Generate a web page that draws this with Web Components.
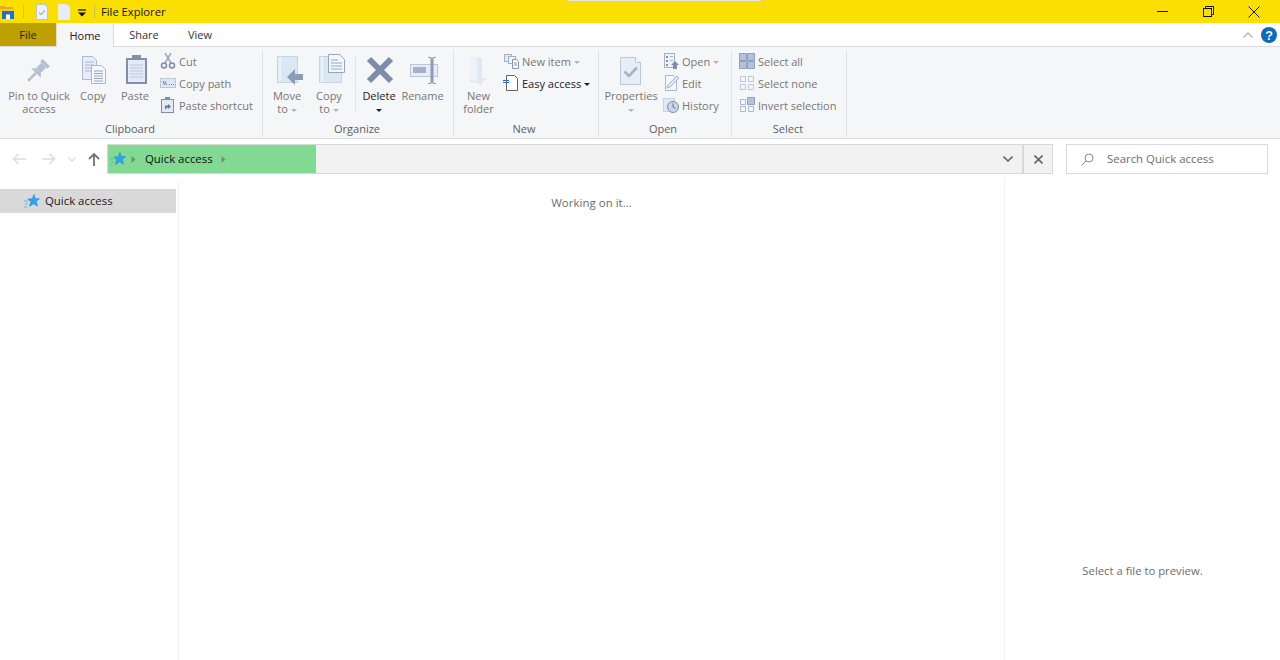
<!DOCTYPE html>
<html lang="en">
<head>
<meta charset="utf-8">
<title>File Explorer</title>
<style>
  html, body { margin: 0; height: 100%; overflow: hidden; background: #fff; }
  body { font-family: "Open Sans", "Noto Sans", "Liberation Sans", sans-serif; font-size: 11px; }
</style>
</head>
<body>
<fx-window>
  <fx-titlebar slot="top">File Explorer</fx-titlebar>
  <fx-tabs slot="top"></fx-tabs>
  <fx-ribbon slot="top">
    <fx-group label="Clipboard" width="263" pad="4" shift="2">
      <fx-large icon="pin" width="70">Pin to Quick<br>access</fx-large>
      <fx-large icon="copy" width="38">Copy</fx-large>
      <fx-large icon="paste" width="46">Paste</fx-large>
      <fx-stack style="margin-left:2px">
        <fx-small icon="cut">Cut</fx-small>
        <fx-small icon="copypath">Copy path</fx-small>
        <fx-small icon="shortcut">Paste shortcut</fx-small>
      </fx-stack>
    </fx-group>
    <fx-group label="Organize" width="191" pad="3" shift="2">
      <fx-large icon="moveto" width="42">Move<br>to <fx-caret></fx-caret></fx-large>
      <fx-large icon="copyto" width="42">Copy<br>to <fx-caret></fx-caret></fx-large>
      <fx-vrule></fx-vrule>
      <fx-large icon="del" width="46" strong>Delete<br><fx-caret dark></fx-caret></fx-large>
      <fx-large icon="rename" width="41">Rename</fx-large>
    </fx-group>
    <fx-group label="New" width="145" pad="3" shift="4">
      <fx-large icon="folder" width="43">New<br>folder</fx-large>
      <fx-stack style="margin-left:3px">
        <fx-small icon="newitem">New item <fx-caret></fx-caret></fx-small>
        <fx-small icon="easy" strong>Easy access <fx-caret dark></fx-caret></fx-small>
      </fx-stack>
    </fx-group>
    <fx-group label="Open" width="133" pad="3" shift="4">
      <fx-large icon="props" width="58">Properties<br><fx-caret></fx-caret></fx-large>
      <fx-stack style="margin-left:3px">
        <fx-small icon="open">Open <fx-caret></fx-caret></fx-small>
        <fx-small icon="edit">Edit</fx-small>
        <fx-small icon="history">History</fx-small>
      </fx-stack>
    </fx-group>
    <fx-group label="Select" width="115" pad="7" shift="2">
      <fx-stack>
        <fx-small icon="selall">Select all</fx-small>
        <fx-small icon="selnone">Select none</fx-small>
        <fx-small icon="selinv">Invert selection</fx-small>
      </fx-stack>
    </fx-group>
  </fx-ribbon>
  <fx-address slot="top"></fx-address>
  <fx-nav slot="nav">Quick access</fx-nav>
  <fx-main slot="main">Working on it...</fx-main>
  <fx-preview slot="preview">Select a file to preview.</fx-preview>
</fx-window>

<script>
// All the ribbon pictures, keyed by name. Large ones are drawn on a 32 box, small ones on 16.
const line = '#a9b9d3'
const pale = '#e6edf7'

const star = `<svg width="16" height="16" viewBox="0 0 16 16">
  <path d="M10 1.500l1.300 4 4.200.2-3.300 2.700 1.300 4.800-3.900-2.500-4.100 2.800 1.300-4.800-3-2.600 4.400-.4z" fill="#2ba6ee" stroke="#1b7fc9" stroke-width=".5"/>
  <path d="M0 8h4M1 11h3M0 14h3" stroke="#5db5ec" stroke-width="1"/>
</svg>`

const LARGE = {
  pin: `<g transform="translate(-2 2) rotate(45 17 15) translate(2.500 2.500) scale(.85)" fill="#b4c0d2"><rect x="11" y="1" width="12" height="4"/><rect x="13" y="5" width="8" height="9"/><path d="M9 18l4-4h8l4 4z"/><rect x="15.500" y="18" width="3" height="13"/></g>`,
  copy: `<path d="M5.500 2.500h10l4 4v19h-14z" fill="${pale}" stroke="${line}"/><path d="M8 8h9M8 11h9M8 14h9M8 17h9" stroke="${line}"/><path d="M14.500 11.500h10l4 4v14h-14z" fill="#f4f7fb" stroke="${line}"/><path d="M17 17h9M17 19.500h9M17 22h9M17 24.500h9M17 27h9" stroke="#94a5c2"/>`,
  paste: `<rect x="7" y="4" width="21" height="26" fill="#8090ab"/><rect x="9" y="6" width="17" height="22" fill="#e3eaf5"/><path d="M11 11h13M11 14h13M11 17h13M11 20h13M11 23h13" stroke="#bccbe2"/><rect x="13" y="1" width="9" height="5" fill="#8090ab"/>`,
  moveto: `<rect x="6.500" y="2.500" width="20" height="26" fill="#dce7f4" stroke="#c5d4e8"/><path d="M9 3v25" stroke="#eef3fa" stroke-width="2"/><path d="M16 23l8-8v5h8v6h-8v5z" fill="#8c9cb5"/>`,
  copyto: `<rect x="6.500" y="2.500" width="22" height="26" fill="#dce7f4" stroke="#c5d4e8"/><path d="M9 3v25" stroke="#eef3fa" stroke-width="2"/><path d="M15.500.5h11l5 5v13h-16z" fill="#f4f7fb" stroke="#94a5c2"/><path d="M18 6h7M18 9h11M18 12h11M18 15h11" stroke="#94a5c2"/>`,
  del: `<path d="M6 5l22 22M28 5L6 27" stroke="#7d8ca8" stroke-width="6"/>`,
  rename: `<rect x="3.500" y="10.500" width="27" height="12" fill="#e6edf7" stroke="#b9c8dd"/><rect x="6" y="13" width="13" height="6" fill="#a3b2ca"/><path d="M25 4v25" stroke="#8c9cb5" stroke-width="3"/><path d="M21 3.500h3l1 1 1-1h3M21 29.500h3l1-1 1 1h3" stroke="#8c9cb5" fill="none"/>`,
  folder: `<path d="M6 3l13 1v20l6 2-6 1v4l-13-4z" fill="#dfe8f4"/><path d="M6 3l8 1 0 24-8-3z" fill="#eef3fa"/>`,
  props: `<path d="M5.500 3.500h15l5 5v22h-20z" fill="${pale}" stroke="#b9c8dd"/><path d="M20.500 3.500v5h5" fill="#f7f9fc" stroke="#b9c8dd"/><path d="M9.500 17.500l4.500 4.500 8-8.500" fill="none" stroke="#a5b3c8" stroke-width="2.600"/>`
}

const SMALL = {
  cut: `<path d="M5 0l6 10M11 0L5 10" stroke="#9aa8bf" stroke-width="1.500"/><circle cx="4" cy="12.500" r="2.500" fill="none" stroke="#7f8ea8" stroke-width="1.500"/><circle cx="12" cy="12.500" r="2.500" fill="none" stroke="#7f8ea8" stroke-width="1.500"/>`,
  copypath: `<rect x=".5" y="3.500" width="15" height="9" fill="#dfe8f4" stroke="#b9c8dd"/><path d="M3 6l1.500 4M5 6l1.500 4" stroke="#6d7f9c"/><path d="M9 9.500h1M11 9.500h1M13 9.500h1" stroke="#6d7f9c"/>`,
  shortcut: `<rect x="1.500" y="2.500" width="12" height="13" fill="#e3eaf5" stroke="#7f8ea8"/><rect x="5" y="0" width="5" height="3" fill="#7f8ea8"/><path d="M5 12V8.500h3V7l3 2.500L8 12v-1.500H6.500V12z" fill="#65758f"/>`,
  newitem: `<rect x="1.500" y="1.500" width="7" height="7" fill="#dfe8f4" stroke="#9fb0c9"/><rect x="5.500" y="3.500" width="7" height="7" fill="#eef3fa" stroke="#9fb0c9"/><path d="M9.500 6.500h4l2 2v7h-6z" fill="#fff" stroke="#8494ae"/><path d="M11 10h3M11 12h3" stroke="#8494ae"/>`,
  easy: `<path d="M3.500.5h8l3 3v12h-11z" fill="#fff" stroke="#666"/><path d="M0 5.500h6M0 7.500h6M3.500 3.500v6" stroke="#2a70c2"/>`,
  open: `<rect x="1.500" y=".5" width="10" height="14" fill="#eef3fa" stroke="#a3b2ca"/><path d="M3 3h2v2H3zM3 7h2v2H3zM3 11h2v2H3z" fill="#8494ae"/><path d="M7 3.500h3M7 7.500h3" stroke="#a3b2ca"/><path d="M8 12l4-4 4 4h-2v4h-4v-4z" fill="#7f8ea8"/>`,
  edit: `<path d="M2.500.5h8l3 3v12h-11z" fill="#f4f7fb" stroke="#a9b9d3"/><path d="M4 13l1-3 9-9 2 2-9 9z" fill="#dfe8f4" stroke="#94a5c2" stroke-width=".8"/>`,
  history: `<rect x=".5" y="1.500" width="11" height="13" fill="#dfe8f4" stroke="#c5d4e8"/><circle cx="10" cy="10" r="5.500" fill="#cbd6e6" stroke="#7f8ea8"/><path d="M10 6.500V10l2.500 1.500" stroke="#5f6f8a" fill="none"/>`,
  selall: `<path d="M.5.500h7v7h-7zM8.500.5h7v7h-7zM.5 8.500h7v7h-7zM8.500 8.500h7v7h-7z" fill="#b4c2d9" stroke="#8ea0bd"/>`,
  selnone: `<path d="M1.500 1.500h5v5h-5zM9.500 1.500h5v5h-5zM1.500 9.500h5v5h-5zM9.500 9.500h5v5h-5z" fill="#f5f6f7" stroke="#b9c8dd"/>`,
  selinv: `<path d="M1.500 2.500h5v5h-5zM1.500 9.500h5v5h-5zM9.500 9.500h5v5h-5z" fill="#f5f6f7" stroke="#a9b9d3"/><path d="M8.500.5h7v7h-7z" fill="#b4c2d9" stroke="#8ea0bd"/>`
}

/** Small helper so each element only has to hand over its css and markup. */
class FxBase extends HTMLElement {
  render (css, html) {
    if (this.shadowRoot) return
    this.attachShadow({ mode: 'open' }).innerHTML = `<style>${css}</style>${html}`
  }
}

class FxWindow extends FxBase {
  connectedCallback () {
    this.render(`
      :host { display: flex; flex-direction: column; height: 660px; position: relative; overflow: hidden; }
      .strip { position: absolute; left: 568px; top: 0; width: 193px; height: 1px; background: #e4e4e4; }
      .body { flex: 1; display: flex; min-height: 0; }
    `, `
      <slot name="top"></slot>
      <div class="body"><slot name="nav"></slot><slot name="main"></slot><slot name="preview"></slot></div>
      <div class="strip"></div>
    `)
  }
}

class FxTitlebar extends FxBase {
  connectedCallback () {
    this.render(`
      :host { display: flex; align-items: center; height: 23px; background: #fadf00; color: #111; font-size: 11.2px; padding-right: 3px; }
      svg { display: block; flex: none; }
      .sep { width: 1px; height: 13px; background: #cdbb55; flex: none; }
      .title { margin-left: 6px; flex: 1; }
      .ctl { width: 46px; height: 23px; display: flex; align-items: center; justify-content: center; flex: none; }
    `, `
      <svg width="15" height="16" viewBox="0 0 15 16" style="margin-right:8px;margin-top:2px">
        <path d="M0 1h5l1 1h7v2H0z" fill="#e8a92a"/>
        <path d="M0 4h14v3H0z" fill="#f6c92c"/>
        <path d="M2 6h12v8H2z" fill="#1e73c8"/>
        <rect x="6" y="9.500" width="4" height="4.500" fill="#fff"/>
      </svg>
      <div class="sep"></div>
      <svg width="14" height="16" viewBox="0 0 14 16" style="margin-left:11px">
        <path d="M1.500.5h8l3 3v12h-11z" fill="#eef3fa" stroke="#b9c6d8"/>
        <path d="M4 8.500l2 2 4-4" fill="none" stroke="#aab6c8" stroke-width="1.300"/>
      </svg>
      <svg width="14" height="16" viewBox="0 0 14 16" style="margin-left:8px">
        <path d="M1 0h9l3 3v13H1z" fill="#e6edf8"/>
      </svg>
      <svg width="8" height="8" viewBox="0 0 8 8" style="margin-left:7px;margin-top:2px">
        <path d="M0 1h8" stroke="#111" stroke-width="1.200"/><path d="M0 3.500h8L4 7.500z" fill="#111"/>
      </svg>
      <div class="sep" style="margin-left:8px"></div>
      <div class="title"><slot></slot></div>
      <div class="ctl"><svg width="11" height="1"><rect width="11" height="1" fill="#111"/></svg></div>
      <div class="ctl"><svg width="11" height="11" viewBox="0 0 11 11" fill="none" stroke="#111"><rect x=".5" y="2.500" width="8" height="8"/><path d="M2.500 2.500v-2h8v8h-2"/></svg></div>
      <div class="ctl"><svg width="12" height="12" viewBox="0 0 12 12" stroke="#111"><path d="M.5.5l11 11M11.500.5l-11 11"/></svg></div>
    `)
  }
}

class FxTabs extends FxBase {
  connectedCallback () {
    this.render(`
      :host { display: flex; align-items: stretch; height: 23px; background: #fff; border-bottom: 1px solid #dadbdc; font-size: 11px; color: #333; }
      .tab { display: flex; align-items: center; justify-content: center; box-sizing: border-box; }
      .file { width: 56px; background: #bca100; color: #1d1d1d; }
      .home { width: 58px; background: #f5f6f7; height: 24px; border: 1px solid #dadbdc; border-width: 0 1px; color: #222; }
      .share { width: 60px; }
      .view { width: 52px; }
      .right { margin-left: auto; display: flex; align-items: center; gap: 8px; padding-right: 3px; }
      svg { display: block; }
    `, `
      <div class="tab file">File</div>
      <div class="tab home">Home</div>
      <div class="tab share">Share</div>
      <div class="tab view">View</div>
      <div class="right">
        <svg width="10" height="6" viewBox="0 0 10 6" fill="none" stroke="#b5b5b5" stroke-width="1.300"><path d="M.5 5.500L5 1l4.500 4.500"/></svg>
        <svg width="16" height="16" viewBox="0 0 16 16"><circle cx="8" cy="8" r="8" fill="#0f69bd"/><text x="8" y="12.500" text-anchor="middle" font-family="Liberation Sans, sans-serif" font-weight="700" font-size="12.500" fill="#fff">?</text></svg>
      </div>
    `)
  }
}

class FxRibbon extends FxBase {
  connectedCallback () {
    this.render(`
      :host { display: flex; height: 91px; background: #f5f6f7; border-bottom: 1px solid #dadbdc; }
    `, `<slot></slot>`)
  }
}

class FxGroup extends FxBase {
  connectedCallback () {
    this.render(`
      :host { display: block; box-sizing: border-box; width: ${this.getAttribute('width')}px; height: 87px; margin-top: 3px; border-right: 1px solid #e2e3e4; position: relative; }
      .row { display: flex; align-items: flex-start; height: 72px; padding-left: ${this.getAttribute('pad')}px; padding-top: 1px; box-sizing: border-box; }
      .label { text-align: center; color: #5f5f5f; font-size: 11px; line-height: 14px; padding-right: ${this.getAttribute('shift')}px; }
    `, `<div class="row"><slot></slot></div><div class="label">${this.getAttribute('label')}</div>`)
  }
}

class FxLarge extends FxBase {
  connectedCallback () {
    const strong = this.hasAttribute('strong')
    this.render(`
      :host { display: flex; flex-direction: column; align-items: center; flex: none; width: ${this.getAttribute('width')}px; color: ${strong ? '#222' : '#777'}; font-size: 11px; line-height: 13px; text-align: center; white-space: nowrap; }
      svg { display: block; margin-top: 3px; margin-bottom: 3px; }
    `, `<svg width="32" height="32" viewBox="0 0 32 32">${LARGE[this.getAttribute('icon')]}</svg><div><slot></slot></div>`)
  }
}

class FxStack extends FxBase {
  connectedCallback () {
    this.render(`:host { display: flex; flex-direction: column; flex: none; margin-top: -1px; }`, `<slot></slot>`)
  }
}

class FxSmall extends FxBase {
  connectedCallback () {
    const strong = this.hasAttribute('strong')
    this.render(`
      :host { display: flex; align-items: center; gap: 3px; height: 22px; color: ${strong ? '#222' : '#777'}; font-size: 11px; white-space: nowrap; }
      svg { display: block; flex: none; }
    `, `<svg width="16" height="16" viewBox="0 0 16 16">${SMALL[this.getAttribute('icon')]}</svg><div><slot></slot></div>`)
  }
}

class FxCaret extends FxBase {
  connectedCallback () {
    const colour = this.hasAttribute('dark') ? '#222' : '#b4b4b4'
    this.render(`
      :host { display: inline-block; width: 0; height: 0; vertical-align: middle; border: 3px solid transparent; border-bottom-width: 0; border-top: 3px solid ${colour}; }
    `, ``)
  }
}

class FxVrule extends FxBase {
  connectedCallback () {
    this.render(`:host { display: block; flex: none; width: 1px; height: 55px; margin: 5px 0 0 5px; background: #e2e3e4; }`, ``)
  }
}

class FxAddress extends FxBase {
  connectedCallback () {
    this.render(`
      :host { display: flex; align-items: flex-start; height: 39px; box-sizing: border-box; padding-top: 5px; background: #fff; font-size: 11.4px; }
      svg { display: block; flex: none; }
      .navs { width: 107px; height: 30px; flex: none; display: flex; align-items: center; box-sizing: border-box; padding-left: 12px; }
      .bar { width: 917px; height: 30px; box-sizing: border-box; flex: none; display: flex; background: #f2f2f2; border: 1px solid #d9d9d9; }
      .crumb { width: 208px; background: #82d992; display: flex; align-items: center; color: #111; padding-left: 2px; box-sizing: border-box; }
      .crumb .name { margin: 0 8px 0 9px; padding-bottom: 2px; }
      .drop { margin-left: auto; width: 28px; display: flex; align-items: center; justify-content: center; border-right: 1px solid #d9d9d9; }
      .close { width: 29px; height: 30px; box-sizing: border-box; flex: none; display: flex; align-items: center; justify-content: center; background: #f2f2f2; border: 1px solid #d9d9d9; border-left: 0; padding-left: 1px; }
      .search { width: 202px; height: 30px; box-sizing: border-box; flex: none; margin-left: 13px; display: flex; align-items: center; background: #fff; border: 1px solid #d9d9d9; color: #6d6d6d; padding-left: 14px; gap: 13px; }
      .search span { padding-bottom: 2px; }
    `, `
      <div class="navs">
        <svg width="14" height="12" viewBox="0 0 14 12" fill="none" stroke="#dcdcdc" stroke-width="1.500"><path d="M14 6H1.500M6.500 1l-5 5 5 5"/></svg>
        <svg width="14" height="12" viewBox="0 0 14 12" fill="none" stroke="#dcdcdc" stroke-width="1.500" style="margin-left:16px"><path d="M0 6h12.500M7.500 1l5 5-5 5"/></svg>
        <svg width="8" height="5" viewBox="0 0 8 5" fill="none" stroke="#dcdcdc" stroke-width="1.300" style="margin-left:12px"><path d="M.5.5L4 4 7.500.5"/></svg>
        <svg width="12" height="14" viewBox="0 0 12 14" fill="none" stroke="#727272" stroke-width="1.800" style="margin-left:12px"><path d="M6 14V2M1 7l5-5 5 5"/></svg>
      </div>
      <div class="bar">
        <div class="crumb">
          ${star}
          <svg width="5" height="7" viewBox="0 0 5 7" style="margin-left:5px"><path d="M.5 0L4.500 3.500.5 7z" fill="#6f8f77"/></svg>
          <span class="name">Quick access</span>
          <svg width="5" height="7" viewBox="0 0 5 7"><path d="M.5 0L4.500 3.500.5 7z" fill="#6f8f77"/></svg>
        </div>
        <div class="drop"><svg width="10" height="6" viewBox="0 0 10 6" fill="none" stroke="#666" stroke-width="1.600"><path d="M.5.5L5 5 9.500.5"/></svg></div>
      </div>
      <div class="close"><svg width="9" height="9" viewBox="0 0 9 9" stroke="#666" stroke-width="1.600"><path d="M.5.500l8 8M8.500.5l-8 8"/></svg></div>
      <div class="search">
        <svg width="13" height="13" viewBox="0 0 13 13" fill="none" stroke="#8a8a8a"><circle cx="8" cy="5" r="4"/><path d="M5 8l-4.500 4.500"/></svg>
        <span>Search Quick access</span>
      </div>
    `)
  }
}

class FxNav extends FxBase {
  connectedCallback () {
    this.render(`
      :host { display: block; flex: none; width: 179px; box-sizing: border-box; position: relative; padding-top: 11px; font-size: 11.4px; color: #1a1a1a; }
      :host::after { content: ""; position: absolute; right: 0; top: 3px; bottom: 0; width: 1px; background: #f1f1f1; }
      .row { display: flex; align-items: center; width: 176px; height: 24px; box-sizing: border-box; padding-left: 24px; gap: 5px; background: #d9d9d9; }
      .row span { padding-bottom: 2px; }
      svg { display: block; }
    `, `<div class="row">${star}<span><slot></slot></span></div>`)
  }
}

class FxMain extends FxBase {
  connectedCallback () {
    this.render(`
      :host { display: block; flex: none; width: 825px; text-align: center; padding-top: 17px; line-height: 16px; font-size: 11.500px; color: #6d6d6d; box-sizing: border-box; }
    `, `<slot></slot>`)
  }
}

class FxPreview extends FxBase {
  connectedCallback () {
    this.render(`
      :host { display: block; flex: 1; text-align: center; padding-top: 385px; line-height: 16px; font-size: 11.300px; color: #6d6d6d; border-left: 1px solid #f1f1f1; box-sizing: border-box; }
    `, `<slot></slot>`)
  }
}

customElements.define('fx-window', FxWindow)
customElements.define('fx-titlebar', FxTitlebar)
customElements.define('fx-tabs', FxTabs)
customElements.define('fx-ribbon', FxRibbon)
customElements.define('fx-group', FxGroup)
customElements.define('fx-large', FxLarge)
customElements.define('fx-stack', FxStack)
customElements.define('fx-small', FxSmall)
customElements.define('fx-caret', FxCaret)
customElements.define('fx-vrule', FxVrule)
customElements.define('fx-address', FxAddress)
customElements.define('fx-nav', FxNav)
customElements.define('fx-main', FxMain)
customElements.define('fx-preview', FxPreview)
</script>
</body>
</html>
